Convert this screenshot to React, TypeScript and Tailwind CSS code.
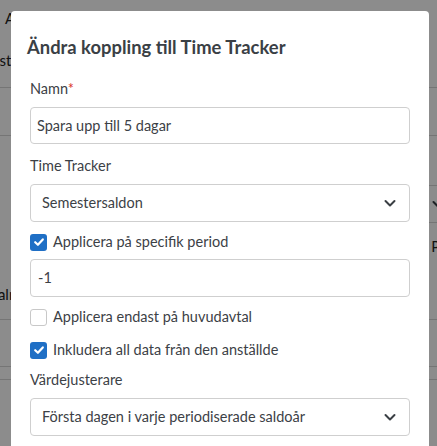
import React from "react";

const font = { fontFamily: '"Lato", "Open Sans", sans-serif' };

function Chevron() {
  return (
    <svg width="14" height="14" viewBox="0 0 14 14" fill="none">
      <path d="M2.5 5 L7 9.5 L11.5 5" stroke="#3a3f44" strokeWidth="2" strokeLinecap="round" strokeLinejoin="round" />
    </svg>
  );
}

function Check({ checked }: { checked: boolean }) {
  if (!checked)
    return <span className="block h-[17px] w-[17px] shrink-0 rounded-[3px] border border-[#c8c8c8] bg-white" />;
  return (
    <span className="flex h-[17px] w-[17px] shrink-0 items-center justify-center rounded-[3px] bg-[#1f6fc5]">
      <svg width="12" height="12" viewBox="0 0 12 12" fill="none">
        <path d="M2.2 6.2 L4.9 8.8 L9.8 3.4" stroke="white" strokeWidth="2.2" strokeLinecap="round" strokeLinejoin="round" />
      </svg>
    </span>
  );
}

export default function App() {
  return (
    <div className="relative h-[446px] w-full overflow-hidden bg-white text-[#3c4146]" style={font}>
      {/* background page */}
      <div className="flex flex-col text-[15px] text-[#222]">
        <div className="flex h-[88px] flex-col border-b border-[#d6d6d6]">
          <div className="flex h-[36px] items-center justify-between pl-[5px]">
            <span className="whitespace-nowrap">Anställd</span>
            <span className="mr-[-60px] whitespace-nowrap">Koppling</span>
          </div>
          <div className="flex h-[48px] items-center justify-between">
            <span className="ml-[-18px] whitespace-nowrap">Bestämd</span>
            <span className="mr-[-40px] whitespace-nowrap">Värde</span>
          </div>
        </div>
        <div className="h-[48px] border-b border-[#d6d6d6]" />
        <div className="h-[49px]" />
        <div className="ml-auto flex h-[38px] w-[160px] items-center justify-end border-y border-[#d6d6d6]">
          <span className="mr-[-8px]">
            <Chevron />
          </span>
        </div>
        <div className="flex h-[46px] items-center justify-end">
          <span className="mr-[-50px] whitespace-nowrap">Perioder</span>
        </div>
        <div className="flex h-[50px] items-center">
          <span className="ml-[-12px] whitespace-nowrap">Kalnder</span>
        </div>
        <div className="h-[1px] bg-[#d6d6d6]" />
        <div className="h-[47px] border-b border-[#d6d6d6]" />
        <div className="h-[13px] border-b border-[#d6d6d6]" />
      </div>
      <div className="absolute inset-0 bg-black/45" />

      {/* modal */}
      <div className="absolute left-[11px] right-[8px] top-[11px] h-[480px] rounded-[4px] bg-white">
        <h2 className="px-4 pt-[24px] text-[18.4px] font-bold leading-[24px] text-[#3a4045]">
          Ändra koppling till Time Tracker
        </h2>
        <div className="flex flex-col px-[19px] pt-[18px] text-[14.5px] text-[#3c4146]">
          <label className="leading-[24px]">
            Namn<span className="text-[#d9342b]">*</span>
          </label>
          <div className="mt-[6px] flex h-[37px] items-center rounded-[4px] border border-[#cfcfcf] px-[6px]">
            Spara upp till 5 dagar
          </div>
          <label className="mt-[10px] leading-[24px]">Time Tracker</label>
          <div className="mt-[6px] flex h-[38px] items-center justify-between rounded-[4px] border border-[#cfcfcf] pl-[11px] pr-[12px]">
            <span>Semestersaldon</span>
            <Chevron />
          </div>
          <div className="mt-[8px] flex h-[24px] items-center gap-[6px]">
            <Check checked />
            <span>Applicera på specifik period</span>
          </div>
          <div className="mt-[5px] flex h-[38px] items-center rounded-[4px] border border-[#cfcfcf] px-[7px]">
            -1
          </div>
          <div className="mt-[8px] flex h-[24px] items-center gap-[6px]">
            <Check checked={false} />
            <span>Applicera endast på huvudavtal</span>
          </div>
          <div className="mt-[9px] flex h-[24px] items-center gap-[6px]">
            <Check checked />
            <span>Inkludera all data från den anställde</span>
          </div>
          <label className="mt-[6px] leading-[24px]">Värdejusterare</label>
          <div className="mt-[6px] flex h-[38px] items-center justify-between rounded-[4px] border border-[#cfcfcf] pl-[11px] pr-[12px]">
            <span>Första dagen i varje periodiserade saldoår</span>
            <Chevron />
          </div>
        </div>
      </div>
    </div>
  );
}
